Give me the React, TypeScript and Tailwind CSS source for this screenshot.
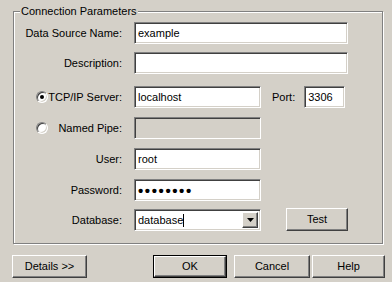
import React from "react";

const sunkenBorder =
  "border border-t-[#808080] border-l-[#808080] border-b-white border-r-white shadow-[inset_1px_1px_0_#404040,inset_-1px_-1px_0_#d4d0c8]";
const sunken = `bg-white ${sunkenBorder}`;
const raised =
  "bg-[#d4d0c8] border border-t-white border-l-white border-b-[#404040] border-r-[#404040] shadow-[inset_-1px_-1px_0_#808080]";

const TextBox: React.FC<{ value?: string; w: string; disabled?: boolean; children?: React.ReactNode }> = ({ value, w, disabled, children }) => (
  <div className={`${disabled ? "bg-[#d4d0c8]" : "bg-white"} ${sunkenBorder} ${w} h-[22px] flex items-center pl-[3px]`}>
    {value}
    {children}
  </div>
);

const Radio: React.FC<{ checked?: boolean }> = ({ checked }) => (
  <div className="w-[12px] h-[12px] rounded-full bg-white border border-t-[#808080] border-l-[#808080] border-b-white border-r-white shadow-[inset_1px_1px_0_#404040,inset_-1px_-1px_0_#d4d0c8] flex items-center justify-center">
    {checked && <div className="w-[4px] h-[4px] rounded-full bg-black" />}
  </div>
);

const Btn: React.FC<{ label: string; w: string; className?: string; isDefault?: boolean }> = ({ label, w, className = "", isDefault }) => (
  <div className={`${w} h-[23px] ${isDefault ? "border border-black" : ""} ${className}`}>
    <div className={`${raised} w-full h-full flex items-center justify-center`}>{label}</div>
  </div>
);

const Label: React.FC<{ children: React.ReactNode }> = ({ children }) => (
  <div className="flex items-center justify-end h-[22px]">{children}</div>
);

export default function App() {
  return (
    <div
      className="w-[392px] h-[282px] bg-[#d4d0c8] text-black text-[11px] leading-[13px] flex flex-col overflow-hidden"
      style={{ fontFamily: '"Liberation Sans", Arial, sans-serif' }}
    >
      {/* Connection Parameters group */}
      <div className="relative ml-[13px] mt-[11px] w-[370px] h-[233px] border border-[#808080] shadow-[inset_1px_1px_0_#fff,1px_1px_0_#fff]">
        <span className="absolute left-[6px] -top-[8px] px-[1px] bg-[#d4d0c8] leading-[14px]">Connection Parameters</span>

        <div className="grid grid-cols-[107px_auto] gap-x-[12px] pt-[10px] pl-[1px]">
          <Label>Data Source Name:</Label>
          <TextBox value="example" w="w-[214px]" />

          <div className="col-span-2 h-[8px]" />
          <Label>Description:</Label>
          <TextBox w="w-[214px]" />

          <div className="col-span-2 h-[12px]" />
          <div className="flex items-center h-[22px] pl-[21px]">
            <Radio checked />
            <span className="flex-1 text-right">TCP/IP Server:</span>
          </div>
          <div className="flex items-center">
            <TextBox value="localhost" w="w-[127px]" />
            <span className="ml-[11px]">Port:</span>
            <div className="ml-[9px]">
              <TextBox value="3306" w="w-[41px]" />
            </div>
          </div>

          <div className="col-span-2 h-[9px]" />
          <div className="flex items-center h-[22px] pl-[21px]">
            <Radio />
            <span className="flex-1 text-right">Named Pipe:</span>
          </div>
          <TextBox w="w-[127px]" disabled />

          <div className="col-span-2 h-[9px]" />
          <Label>User:</Label>
          <TextBox value="root" w="w-[127px]" />

          <div className="col-span-2 h-[9px]" />
          <Label>Password:</Label>
          <TextBox w="w-[127px]">
            <span className="text-[15px] leading-[13px] font-bold tracking-[1.6px]">••••••••</span>
          </TextBox>

          <div className="col-span-2 h-[8px]" />
          <Label>Database:</Label>
          <div className="flex items-center">
            <div className={`${sunken} w-[127px] h-[22px] flex items-center pl-[3px] pr-[2px]`}>
              <span>database</span>
              <span className="w-px h-[13px] bg-black" />
              <div className={`${raised} ml-auto w-[16px] h-[16px] flex items-center justify-center`}>
                <svg width="7" height="4" viewBox="0 0 7 4">
                  <path d="M0 0h7L3.5 4z" fill="#000" />
                </svg>
              </div>
            </div>
            <Btn label="Test" w="w-[62px]" className="ml-[25px] -mt-[2px]" />
          </div>
        </div>
      </div>

      {/* Bottom buttons */}
      <div className="flex mt-[11px] pl-[12px]">
        <Btn label="Details >>" w="w-[75px]" />
        <Btn label="OK" w="w-[74px]" className="ml-[66px]" isDefault />
        <Btn label="Cancel" w="w-[76px]" className="ml-[7px]" />
        <Btn label="Help" w="w-[73px]" className="ml-[2px]" />
      </div>
    </div>
  );
}
